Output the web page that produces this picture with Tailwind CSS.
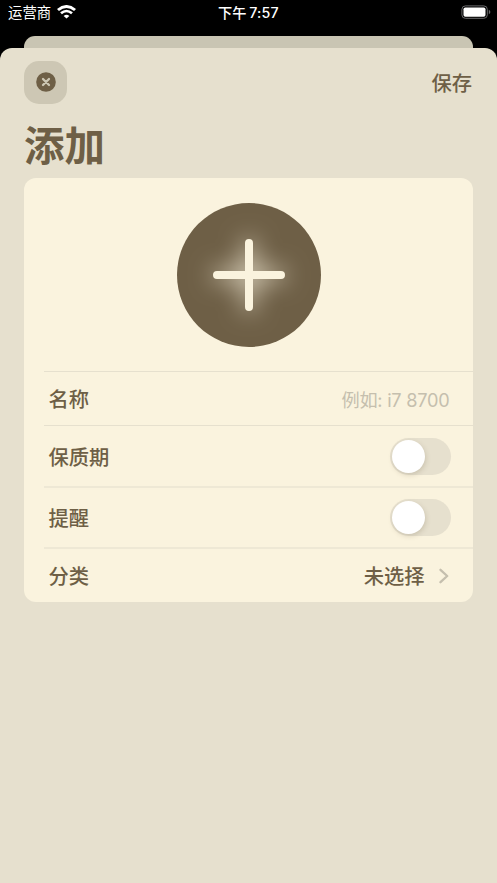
<!DOCTYPE html>
<html lang="zh-CN">
<head>
<meta charset="utf-8">
<title>添加</title>
<script src="https://cdn.jsdelivr.net/npm/@tailwindcss/browser@4"></script>
</head>
<body class="bg-black">
<div class="flex h-[883px] w-[497px] flex-col overflow-hidden bg-black font-['Inter','Noto_Sans_CJK_SC',sans-serif] text-[#6e5f46]">
  <header class="grid h-9 shrink-0 grid-cols-3 items-start text-white">
    <div class="flex items-center pl-[8px] pt-[2px]">
      <span class="text-[14.4px] leading-[22px]">运营商</span>
      <svg class="ml-[6px] -mt-[2px] h-[14px] w-[19px]" viewBox="0 0 18 14" preserveAspectRatio="none" fill="none" stroke="#fff">
        <path d="M.9 5Q9-2.1 17.1 5" stroke-width="2.8"/>
        <path d="M3.8 8.2Q9 3.8 14.2 8.2" stroke-width="2.6"/>
        <path d="M6.3 10.9Q9 8.7 11.7 10.9L9 13.6Z" fill="#fff" stroke="none"/>
      </svg>
    </div>
    <div class="pt-[2px] text-center text-[14.2px] font-medium leading-[22px] whitespace-nowrap">下午 <span class="-ml-px tracking-[0.25px]">7:57</span></div>
    <div class="flex justify-end pr-[6px] pt-[5px]">
      <svg class="h-[14px] w-[30px]" viewBox="0 0 30 14">
        <rect x=".9" y=".9" width="25.4" height="12.4" rx="3.5" fill="none" stroke="#6a6a6c" stroke-width="1"/>
        <rect x="2.5" y="2.4" width="22" height="9.4" rx="1.8" fill="#fff"/>
        <path d="M27.8 4.8Q29.4 5.5 29.4 7T27.8 9.2Z" fill="#6a6a6c"/>
      </svg>
    </div>
  </header>
  <div class="mx-6 h-6 shrink-0 rounded-t-[11px] bg-[#c9c5b3]"></div>
  <main class="relative -mt-3 flex-1 rounded-t-[12px] bg-[#e6e0ce] px-6 pt-3">
    <div class="flex h-[44px] items-center justify-between">
      <button class="flex h-[43px] w-[43px] items-center justify-center rounded-[15px] bg-[#cdc7b4]" aria-label="关闭">
        <svg class="h-5 w-5" viewBox="0 0 20 20">
          <circle cx="10" cy="10" r="9.8" fill="#6e5f46"/>
          <path d="M7 7l6 6M13 7l-6 6" stroke="#cdc7b4" stroke-width="2.3" stroke-linecap="round"/>
        </svg>
      </button>
      <button class="pr-px pt-[3px] text-[20.3px] font-medium leading-[30px]">保存</button>
    </div>
    <h1 class="h-[74px] pt-[14px] text-[40.5px] font-bold leading-[58px]">添加</h1>
    <section class="h-[424px] overflow-hidden rounded-[12px] bg-[#faf3de] text-[20.3px] font-medium">
      <div class="flex h-[193px] items-center justify-center">
        <svg class="h-[144px] w-[144px]" viewBox="0 0 144 144">
          <defs>
            <filter id="glow" x="-80%" y="-80%" width="260%" height="260%"><feGaussianBlur stdDeviation="12"/></filter>
          </defs>
          <circle cx="72" cy="72" r="72" fill="#6e5f46"/>
          <path d="M72 40V104M40 72H104" stroke="#faf3de" stroke-width="9" stroke-linecap="round" filter="url(#glow)"/>
          <path d="M72 40V104M40 72H104" stroke="#faf3de" stroke-width="8" stroke-linecap="round"/>
        </svg>
      </div>
      <div class="ml-[20px] flex h-[54px] items-center justify-between border-t border-[#e6e0ce] pl-[4.5px] pr-[23.5px]">
        <span class="pt-[4px]">名称</span><span class="pt-[4px] text-[18.2px] font-normal tracking-[-0.25px] text-[#c5bfae]">例如: i7 8700</span>
      </div>
      <div class="ml-[20px] flex h-[61px] items-center justify-between border-t border-[#e6e0ce] pl-[4.5px] pr-[22px]">
        <span class="pt-[5px]">保质期</span>
        <span class="flex h-[37px] w-[61px] items-center rounded-full bg-[#e6e0ce] pl-[2px]"><span class="h-[33px] w-[33px] rounded-full bg-white shadow-[1px_2px_5px_#6e5f4638]"></span></span>
      </div>
      <div class="ml-[20px] flex h-[61px] items-center justify-between border-t-2 border-[#eee8d5] pl-[4.5px] pr-[22px]">
        <span class="pt-[4px]">提醒</span>
        <span class="flex h-[37px] w-[61px] items-center rounded-full bg-[#e6e0ce] pl-[2px]"><span class="h-[33px] w-[33px] rounded-full bg-white shadow-[1px_2px_5px_#6e5f4638]"></span></span>
      </div>
      <div class="ml-[20px] flex h-[55px] items-center justify-between border-t-2 border-[#eee8d5] pl-[4.5px] pr-[24.5px]">
        <span class="pt-[3px]">分类</span>
        <span class="flex items-center gap-[14px]"><span class="pt-[3px]">未选择</span>
          <svg class="h-[16px] w-[10px]" viewBox="0 0 10 16" fill="none" stroke="#c5bfae" stroke-width="2.3" stroke-linecap="round" stroke-linejoin="round"><path d="M1.5 1.8L8.2 8L1.5 14.2"/></svg>
        </span>
      </div>
    </section>
  </main>
</div>
</body>
</html>
